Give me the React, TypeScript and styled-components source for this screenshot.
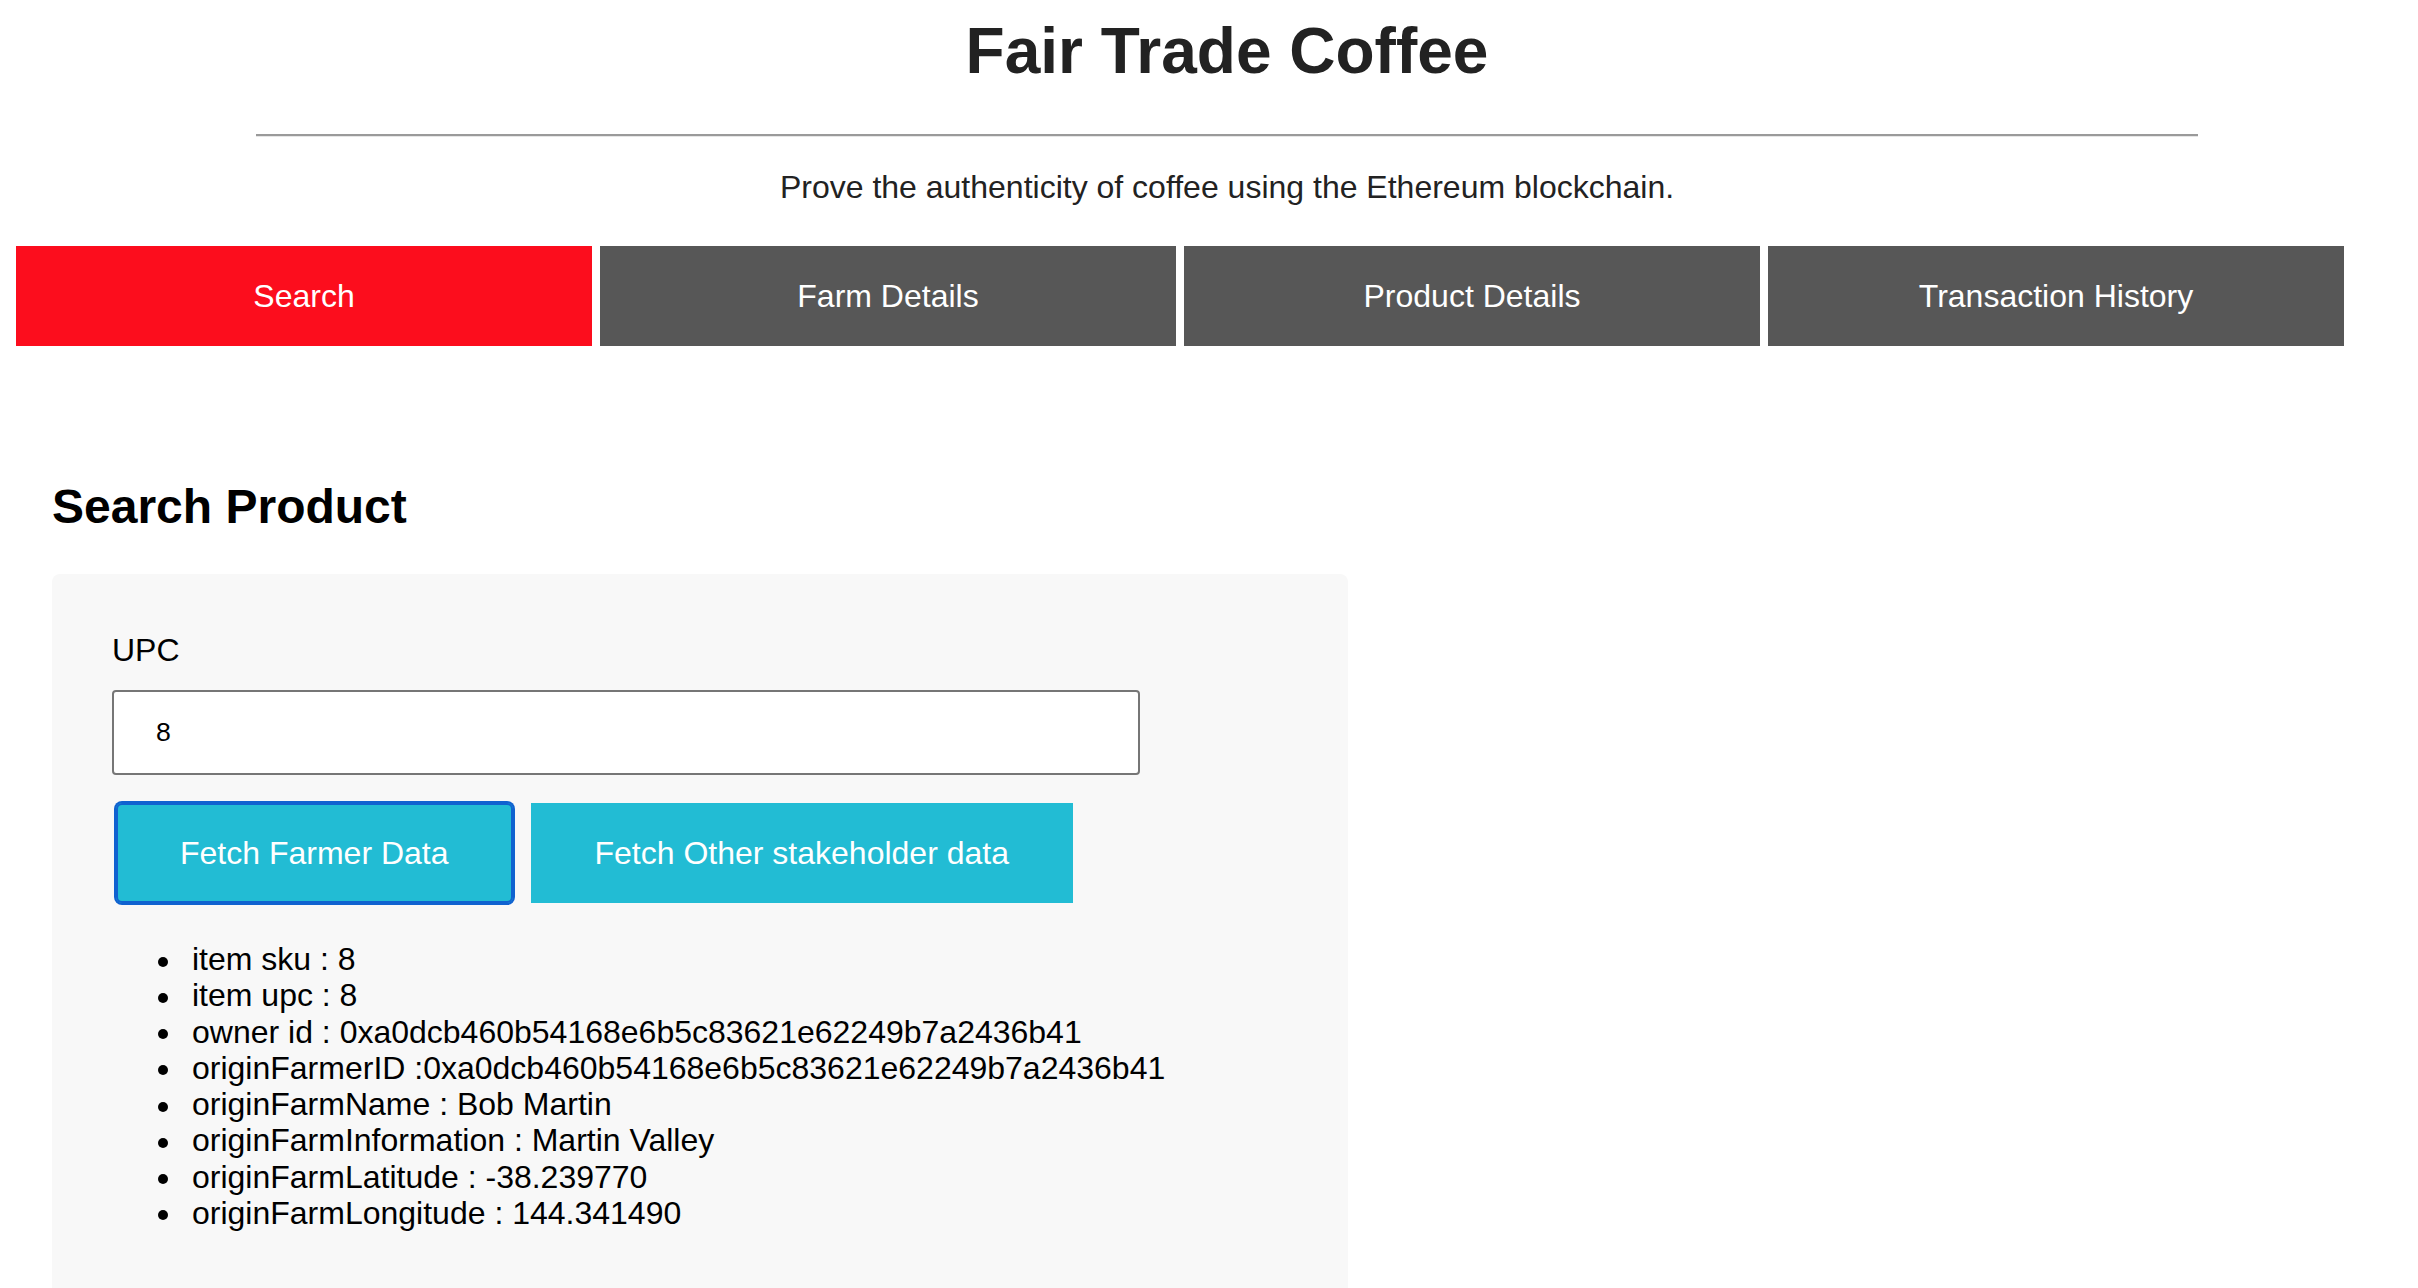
import React from "react";
import styled, { createGlobalStyle } from "styled-components";

const GlobalStyle = createGlobalStyle`
  html, body {
    margin: 0;
    padding: 0;
    background: #ffffff;
  }
  body {
    font-family: "Liberation Sans", Arial, Helvetica, sans-serif;
    color: #000;
  }
  * { box-sizing: border-box; }
`;

const Page = styled.div`
  width: 2418px;
  min-height: 1288px;
  overflow: hidden;
`;

const Header = styled.header`
  margin-left: 36px;
  padding-top: 15px;
  display: flex;
  flex-direction: column;
  align-items: center;
  color: #222222;
`;

const Title = styled.h1`
  margin: 0;
  font-size: 64px;
  line-height: 73.6px;
  font-weight: 700;
`;

const Rule = styled.hr`
  width: 1942px;
  margin: 45px 0 0 0;
  height: 0;
  border: none;
  border-top: 2px solid #9a9a9a;
  border-bottom: 1px solid #e6e6e6;
`;

const Subtitle = styled.p`
  margin: 32px 0 0 0;
  font-size: 32px;
  line-height: 36.8px;
`;

const Tabs = styled.nav`
  display: flex;
  gap: 8px;
  margin: 41px 0 0 16px;
`;

const Tab = styled.button<{ $active?: boolean }>`
  width: 576px;
  height: 100px;
  border: none;
  padding: 0;
  background: ${(p) => (p.$active ? "#fc0d1d" : "#575757")};
  color: #ffffff;
  font-family: "Liberation Sans", Arial, sans-serif;
  font-size: 32px;
  line-height: 36.8px;
  cursor: pointer;
`;

const Content = styled.main`
  margin: 133px 0 0 52px;
`;

const SectionTitle = styled.h2`
  margin: 0;
  font-size: 48px;
  line-height: 55px;
  font-weight: 700;
  color: #000;
`;

const Panel = styled.section`
  margin-top: 40px;
  width: 1296px;
  padding: 58px 60px 64px 60px;
  background: #f8f8f8;
  border-radius: 8px;
`;

const Label = styled.label`
  display: block;
  font-size: 32px;
  line-height: 36.8px;
  color: #000;
`;

const Input = styled.input`
  display: block;
  margin-top: 21px;
  width: 1028px;
  height: 85px;
  border: 2px solid #767676;
  border-radius: 4px;
  padding: 0 0 0 42px;
  background: #ffffff;
  font-family: "Liberation Sans", Arial, sans-serif;
  font-size: 26.67px;
  color: #000;
  outline: none;
`;

const ButtonRow = styled.div`
  display: flex;
  gap: 18px;
  margin-top: 28px;
  padding-left: 4px;
`;

const ActionButton = styled.button<{ $focused?: boolean }>`
  height: 100px;
  padding: 0 64px;
  border: none;
  background: #22bcd4;
  color: #ffffff;
  font-family: "Liberation Sans", Arial, sans-serif;
  font-size: 32px;
  line-height: 36.8px;
  cursor: pointer;
  border-radius: ${(p) => (p.$focused ? "6px" : "0")};
  box-shadow: ${(p) =>
    p.$focused ? "0 0 0 2px #1062d0, inset 0 0 0 2px #1062d0" : "none"};
  outline: none;
`;

const Details = styled.ul`
  margin: 38px 0 0 0;
  padding-left: 80px;
  list-style: none;
  font-size: 32px;
  line-height: 36.25px;
  color: #000;
`;

const Item = styled.li`
  &::before {
    content: "";
    display: inline-block;
    width: 10px;
    height: 10px;
    border-radius: 50%;
    background: #000;
    margin-left: -34px;
    margin-right: 24px;
    vertical-align: middle;
  }
`;

const details = [
  "item sku : 8",
  "item upc : 8",
  "owner id : 0xa0dcb460b54168e6b5c83621e62249b7a2436b41",
  "originFarmerID :0xa0dcb460b54168e6b5c83621e62249b7a2436b41",
  "originFarmName : Bob Martin",
  "originFarmInformation : Martin Valley",
  "originFarmLatitude : -38.239770",
  "originFarmLongitude : 144.341490",
];

const tabs = ["Search", "Farm Details", "Product Details", "Transaction History"];

export default function App() {
  return (
    <Page>
      <GlobalStyle />
      <Header>
        <Title>Fair Trade Coffee</Title>
        <Rule />
        <Subtitle>Prove the authenticity of coffee using the Ethereum blockchain.</Subtitle>
      </Header>
      <Tabs>
        {tabs.map((t, i) => (
          <Tab key={t} $active={i === 0}>
            {t}
          </Tab>
        ))}
      </Tabs>
      <Content>
        <SectionTitle>Search Product</SectionTitle>
        <Panel>
          <Label htmlFor="upc">UPC</Label>
          <Input id="upc" defaultValue="8" />
          <ButtonRow>
            <ActionButton $focused>Fetch Farmer Data</ActionButton>
            <ActionButton>Fetch Other stakeholder data</ActionButton>
          </ButtonRow>
          <Details>
            {details.map((d) => (
              <Item key={d}>{d}</Item>
            ))}
          </Details>
        </Panel>
      </Content>
    </Page>
  );
}
